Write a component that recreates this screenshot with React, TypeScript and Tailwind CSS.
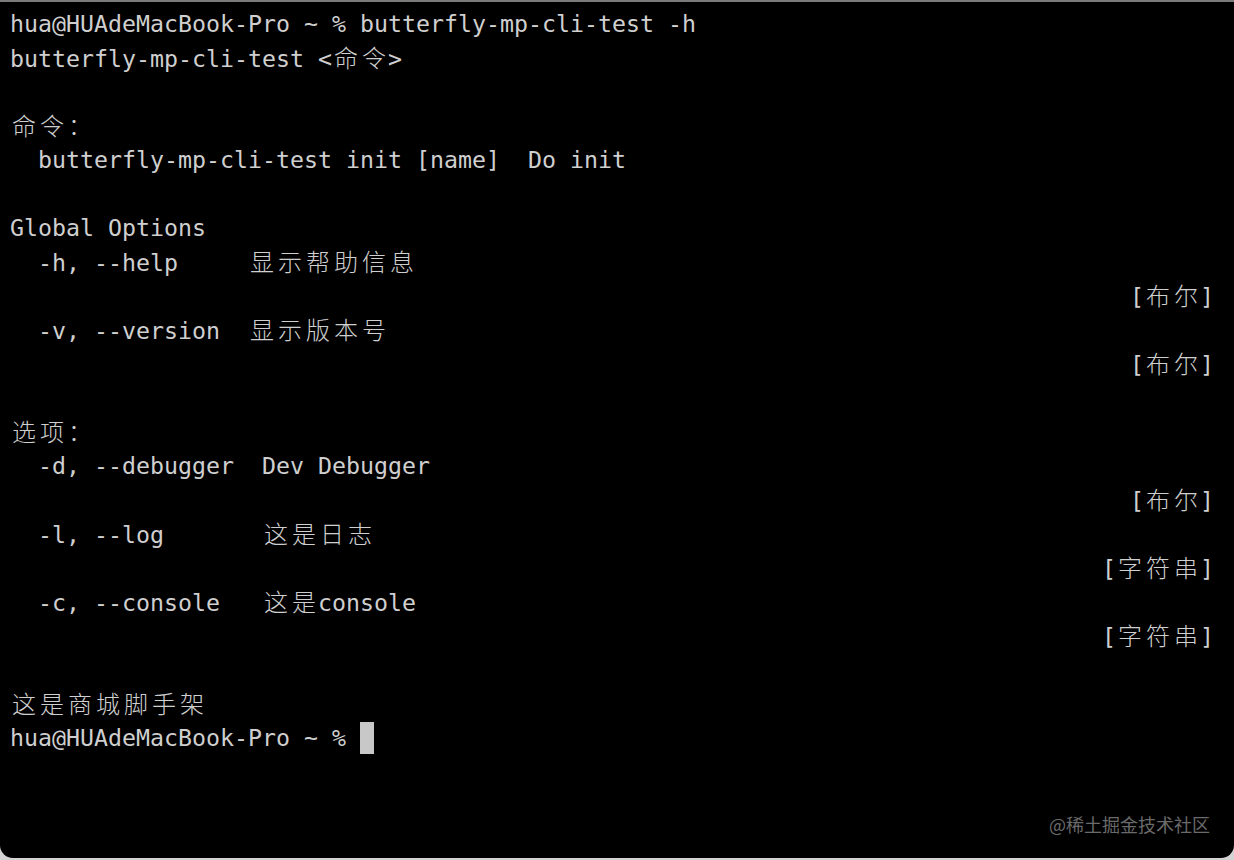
import React from "react";

const isWide = (ch: string) => /[\u3000-\u9fff\uff00-\uffef]/.test(ch);

function TermText({ text }: { text: string }) {
  const parts: React.ReactNode[] = [];
  let buf = "";
  let k = 0;
  for (const ch of Array.from(text)) {
    if (isWide(ch)) {
      if (buf) {
        parts.push(<span key={k++}>{buf}</span>);
        buf = "";
      }
      parts.push(
        <span
          key={k++}
          className="inline-block w-[28px] text-center text-[24px] [font-family:'Noto_Sans_CJK_SC','Noto_Sans',sans-serif] font-light"
        >
          {ch}
        </span>
      );
    } else {
      buf += ch;
    }
  }
  if (buf) parts.push(<span key={k++}>{buf}</span>);
  return <>{parts}</>;
}

type Line = { text: string; right?: boolean; cursor?: boolean };

const lines: Line[] = [
  { text: "hua@HUAdeMacBook-Pro ~ % butterfly-mp-cli-test -h" },
  { text: "butterfly-mp-cli-test <命令>" },
  { text: "" },
  { text: "命令：" },
  { text: "  butterfly-mp-cli-test init [name]  Do init" },
  { text: "" },
  { text: "Global Options" },
  { text: "  -h, --help     显示帮助信息" },
  { text: "[布尔]", right: true },
  { text: "  -v, --version  显示版本号" },
  { text: "[布尔]", right: true },
  { text: "" },
  { text: "选项：" },
  { text: "  -d, --debugger  Dev Debugger" },
  { text: "[布尔]", right: true },
  { text: "  -l, --log       这是日志" },
  { text: "[字符串]", right: true },
  { text: "  -c, --console   这是console" },
  { text: "[字符串]", right: true },
  { text: "" },
  { text: "这是商城脚手架" },
  { text: "hua@HUAdeMacBook-Pro ~ % ", cursor: true },
];

export default function App() {
  return (
    <div className="w-[1234px] h-[860px] bg-[#d4d4d4] overflow-hidden">
      <div className="relative w-[1234px] h-[858px] bg-black rounded-b-[13px] border-t-2 border-t-[#7a7a7a] overflow-hidden">
        <div className="pl-[10px] pt-[5px] w-[1214px] text-[#cfcfcf] text-[23.25px] leading-[34px] [font-family:'DejaVu_Sans_Mono',monospace] whitespace-pre">
          {lines.map((l, i) => (
            <div
              key={i}
              className={`h-[34px] flex items-center ${l.right ? "justify-end" : "justify-start"}`}
            >
              <span className="whitespace-pre">
                <TermText text={l.text} />
              </span>
              {l.cursor && <span className="inline-block w-[14px] h-[32px] bg-[#c8c8c8]" />}
            </div>
          ))}
        </div>
        <div className="absolute right-[24px] bottom-[22px] text-[18px] leading-[24px] text-[#6a6a6a] [font-family:'Noto_Sans_CJK_SC','Noto_Sans',sans-serif]">
          @稀土掘金技术社区
        </div>
      </div>
    </div>
  );
}
